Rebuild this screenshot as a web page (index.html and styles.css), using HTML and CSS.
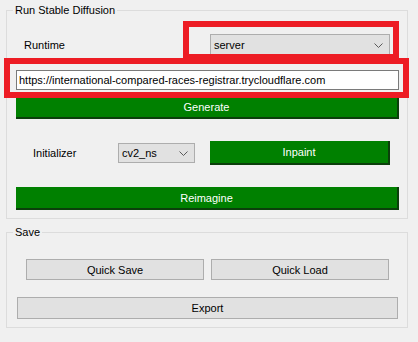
FILE: index.html
```html
<!DOCTYPE html>
<html>
<head>
    <meta charset="UTF-8">
    <meta name="viewport" content="width=device-width, initial-scale=1.0">
    <title>Run Stable Diffusion</title>
    <link rel="stylesheet" href="styles.css">
</head>
<body>
    <div class="wrap">
        <fieldset class="group runGroup">
            <legend>Run Stable Diffusion</legend>
            <div class="row runtimeRow">
                <span class="label runtimeLabel">Runtime</span>
                <div class="combo runtimeCombo">
                    <span>server</span>
                    <svg width="9" height="5" viewBox="0 0 9 5"><path d="M0.5 0.5 L4.5 4.5 L8.5 0.5" fill="none" stroke="#5a5a5a" stroke-width="1"/></svg>
                </div>
            </div>
            <div class="urlBox">https://international-compared-races-registrar.trycloudflare.com</div>
            <div class="greenBtn generateBtn">Generate</div>
            <div class="row initRow">
                <span class="label initLabel">Initializer</span>
                <div class="combo initCombo">
                    <span>cv2_ns</span>
                    <svg width="9" height="5" viewBox="0 0 9 5"><path d="M0.5 0.5 L4.5 4.5 L8.5 0.5" fill="none" stroke="#5a5a5a" stroke-width="1"/></svg>
                </div>
                <div class="greenBtn inpaintBtn">Inpaint</div>
            </div>
            <div class="greenBtn reimagineBtn">Reimagine</div>
        </fieldset>

        <fieldset class="group saveGroup">
            <legend>Save</legend>
            <div class="row quickRow">
                <div class="grayBtn quickBtn">Quick Save</div>
                <div class="grayBtn quickBtn">Quick Load</div>
            </div>
            <div class="grayBtn exportBtn">Export</div>
        </fieldset>

        <div class="mark markRuntime"></div>
        <div class="mark markUrl"></div>
    </div>
</body>
</html>
```

FILE: styles.css
```css
*{ margin: 0; padding: 0; box-sizing: border-box; }
html, body{ background: #f0f0f0; }
body{ font-family: "Liberation Sans", Arial, sans-serif; font-size: 11px; color: #000; }
.wrap{ position: relative; width: 418px; height: 342px; padding-top: 3px; }

.group{ margin-left: 6px; width: 402px; border: 1px solid #dcdcdc; padding: 0; }
.group legend{ margin-left: 6px; padding: 0 2px; line-height: 14px; }
.runGroup{ padding-bottom: 8px; }
.saveGroup{ margin-top: 6px; padding-bottom: 8px; }

.row{ display: flex; align-items: center; }
.label{ display: block; }

.combo{ display: flex; align-items: center; justify-content: space-between; background: #e1e1e1; border: 1px solid #adadad; padding: 0 6px 0 3px; }
.combo svg{ display: block; }

.runtimeRow{ margin-top: 17px; height: 22px; padding-left: 17px; }
.runtimeLabel{ width: 186px; }
.runtimeCombo{ width: 180px; height: 22px; }

.urlBox{ margin: 14px 8px 0 9px; height: 20px; background: #fff; border: 1px solid #7a7a7a; padding-left: 2px; line-height: 18px; white-space: nowrap; overflow: hidden; }

.greenBtn{ background: #008000; color: #fff; text-align: center; border-right: 2px solid #0b3f0b; border-bottom: 2px solid #0b3f0b; display: flex; align-items: center; justify-content: center; }
.generateBtn{ margin: 7px 8px 0 9px; height: 22px; }
.initRow{ margin-top: 22px; height: 24px; padding-left: 26px; }
.initLabel{ width: 85px; }
.initCombo{ width: 77px; height: 20px; }
.inpaintBtn{ margin-left: 15px; width: 180px; height: 24px; }
.reimagineBtn{ margin: 22px 8px 0 9px; height: 23px; }

.grayBtn{ background: #e1e1e1; border: 1px solid #adadad; display: flex; align-items: center; justify-content: center; }
.quickRow{ margin-top: 20px; padding-left: 19px; gap: 7px; }
.quickBtn{ width: 178px; height: 21px; }
.exportBtn{ margin: 17px 0 0 10px; width: 381px; height: 22px; }

.mark{ position: absolute; border: 6px solid #ed1c24; }
.markRuntime{ left: 183px; top: 21px; width: 216px; height: 39px; }
.markUrl{ left: 4px; top: 58px; width: 405px; height: 40px; }
```
